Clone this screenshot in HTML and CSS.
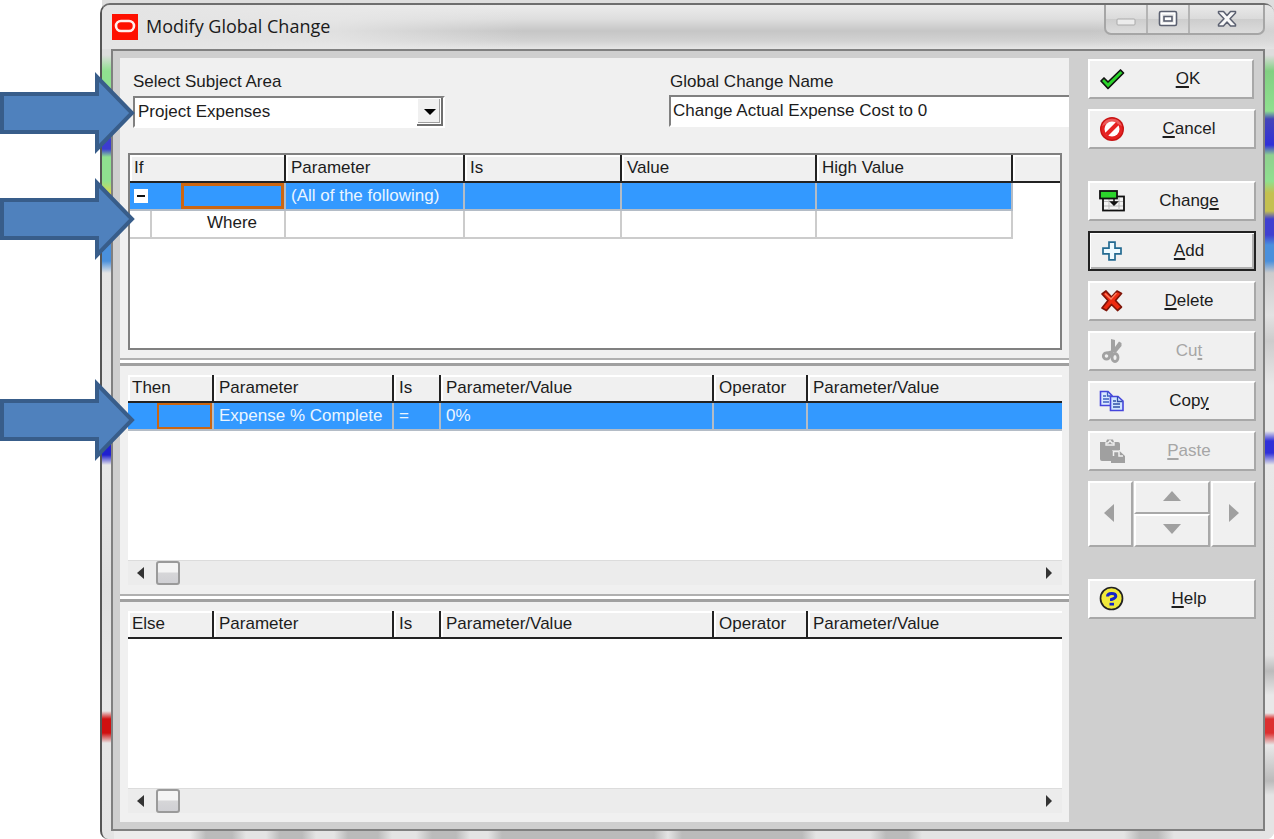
FILE: index.html
```html
<!DOCTYPE html>
<html lang="en">
<head>
<meta charset="utf-8">
<title>Modify Global Change</title>
<link rel="stylesheet" href="styles.css">
</head>
<body>
<div class="stage">
  <section class="window" aria-label="Modify Global Change">
    <header class="titlebar">
      <svg class="logo" width="26" height="26" viewBox="0 0 26 26" aria-hidden="true"><rect width="26" height="26" fill="#fe1000"/><rect x="4" y="7" width="18" height="10" rx="5" fill="none" stroke="#fff0ee" stroke-width="2.600"/></svg>
      <h1 class="title">Modify Global Change</h1>
      <div class="caption-buttons">
        <button class="caption" aria-label="Minimize"><svg width="20" height="20" viewBox="0 0 20 20"><rect x="1" y="10" width="18" height="6" rx="1" fill="#ececec" stroke="#aaa"/></svg></button>
        <button class="caption" aria-label="Maximize"><svg width="20" height="20" viewBox="0 0 20 20"><rect x="1.500" y="2.500" width="17" height="14" rx="1.500" fill="#fff" stroke="#5b6070" stroke-width="1.600"/><rect x="4" y="5" width="12" height="9" fill="#eee"/><rect x="6" y="7.500" width="8" height="4.500" fill="#fff" stroke="#5b6070" stroke-width="1.600"/></svg></button>
        <button class="caption caption-close" aria-label="Close"><svg width="20" height="20" viewBox="0 0 20 20"><path d="M1.500 2.500H6.500L10 6.500L13.500 2.500H18.500V4L13 9.700L18.500 15.500V17H13.500L10 13L6.500 17H1.500V15.500L7 9.700L1.500 4Z" fill="#f8f8f8" stroke="#5b6070" stroke-width="1.500" stroke-linejoin="round"/></svg></button>
      </div>
    </header>

    <div class="client">
      <main class="panel">
        <section class="pane pane-if">
          <div class="fields">
            <div class="field">
              <label for="subject">Select Subject Area</label>
              <div class="combo">
                <select id="subject"><option>Project Expenses</option></select>
                <svg class="combo-arrow" viewBox="0 0 26 28" width="26" height="28" aria-hidden="true"><rect width="26" height="28" fill="#6f6f6f"/><rect width="24" height="26" fill="#fff"/><rect x="1" y="1" width="22" height="24" fill="#a0a0a0"/><rect x="1" y="1" width="21" height="23" fill="#f0f0f0"/><path d="M7 11H19L13 17Z" fill="#000"/></svg>
              </div>
            </div>
            <div class="field field-name">
              <label for="name">Global Change Name</label>
              <input id="name" type="text" value="Change Actual Expense Cost to 0">
            </div>
          </div>
          <div class="grid grid-framed">
            <table class="table-if">
              <colgroup><col class="if-a"><col class="if-b"><col class="if-c"><col class="if-d"><col class="if-e"><col></colgroup>
              <thead><tr><th>If</th><th>Parameter</th><th>Is</th><th>Value</th><th>High Value</th><th></th></tr></thead>
              <tbody>
                <tr class="selected"><td class="tree"><div class="tree-cell"><button class="toggle" aria-label="Collapse"></button><span class="focus-box focus-if"></span></div></td><td>(All of the following)</td><td></td><td></td><td></td><td class="blank"></td></tr>
                <tr><td class="tree"><div class="tree-child">Where</div></td><td></td><td></td><td></td><td></td><td class="blank"></td></tr>
              </tbody>
            </table>
          </div>
        </section>
        <div class="splitter"></div>
        <section class="pane pane-then">
          <div class="grid">
            <table>
              <colgroup><col class="th-a"><col class="th-b"><col class="th-c"><col class="th-d"><col class="th-e"><col></colgroup>
              <thead><tr><th>Then</th><th>Parameter</th><th>Is</th><th>Parameter/Value</th><th>Operator</th><th>Parameter/Value</th></tr></thead>
              <tbody><tr class="selected"><td class="tree"><div class="tree-cell"><span class="focus-box focus-then"></span></div></td><td>Expense % Complete</td><td>=</td><td>0%</td><td></td><td></td></tr></tbody>
            </table>
          </div>
          <div class="scrollbar">
            <button class="scroll-step" aria-label="Scroll left"><svg width="8" height="12" viewBox="0 0 8 12"><path d="M7 0V12L0 6Z" fill="#333"/></svg></button>
            <span class="thumb"></span>
            <button class="scroll-step scroll-end" aria-label="Scroll right"><svg width="8" height="12" viewBox="0 0 8 12"><path d="M1 0V12L7 6Z" fill="#333"/></svg></button>
          </div>
        </section>
        <div class="splitter"></div>
        <section class="pane pane-else">
          <div class="grid">
            <table>
              <colgroup><col class="th-a"><col class="th-b"><col class="th-c"><col class="th-d"><col class="th-e"><col></colgroup>
              <thead><tr><th>Else</th><th>Parameter</th><th>Is</th><th>Parameter/Value</th><th>Operator</th><th>Parameter/Value</th></tr></thead>
            </table>
          </div>
          <div class="scrollbar">
            <button class="scroll-step" aria-label="Scroll left"><svg width="8" height="12" viewBox="0 0 8 12"><path d="M7 0V12L0 6Z" fill="#333"/></svg></button>
            <span class="thumb"></span>
            <button class="scroll-step scroll-end" aria-label="Scroll right"><svg width="8" height="12" viewBox="0 0 8 12"><path d="M1 0V12L7 6Z" fill="#333"/></svg></button>
          </div>
        </section>
      </main>

      <aside class="actions">
        <div class="group">
          <button class="action action-ok"><svg viewBox="0 0 26 26"><path d="M2 15L5 12L9 16L21.500 4L24.500 7L9 22.500Z" fill="#2bd42b" stroke="#111" stroke-width="1.700" stroke-linejoin="round"/></svg><span><u>O</u>K</span></button>
          <button class="action"><svg viewBox="0 0 26 26"><circle cx="13" cy="13" r="12" fill="#c81414"/><circle cx="13" cy="13" r="10.600" fill="#e62222"/><path d="M3 10A10.500 10.500 0 0 1 23 10Q13 4 3 10Z" fill="#f08080" opacity=".6"/><circle cx="13" cy="13" r="7.500" fill="#fff"/><path d="M7.500 18.500L18.500 7.500" stroke="#e62222" stroke-width="4"/></svg><span><u>C</u>ancel</span></button>
        </div>
        <div class="group">
          <button class="action"><svg viewBox="0 0 26 26"><rect x="4" y="8.500" width="21" height="14" fill="#f4f4f4" stroke="#111" stroke-width="1.800"/><path d="M5 13.500H24M5 18H24M10 10V22M20 10V22" stroke="#bbb"/><rect x="1" y="3" width="17" height="7.500" fill="#2bd42b" stroke="#111" stroke-width="1.800"/><path d="M15 10V15M12 14L15 17L18 14Z" fill="#111" stroke="#111" stroke-width="1.500"/></svg><span>Chang<u>e</u></span></button>
          <button class="action action-default"><svg viewBox="0 0 26 26"><path d="M10 4.200H16V10.200H22V15.800H16V21.800H10V15.800H4V10.200H10Z" fill="#eefaff" stroke="#236a91" stroke-width="1.700"/></svg><span><u>A</u>dd</span></button>
          <button class="action"><svg viewBox="0 0 26 26"><path d="M3 6L7 3L12.500 9L18 3L22.500 5.500L16.500 12.500L22.500 19L18.500 22.500L12.500 16.500L7.500 22.500L3 20L9 12.500Z" fill="#ee2a10" stroke="#7e1408" stroke-width="1.700" stroke-linejoin="round"/><path d="M6 5.500L12 11L17.500 5" stroke="#ff8060" stroke-width="1.300" fill="none"/></svg><span><u>D</u>elete</span></button>
          <button class="action" disabled><svg viewBox="0 0 26 26"><path d="M12 1L16 2V9L20 3.500L22.500 5V8L17 14.500H12Z" fill="#a2a2a2"/><circle cx="7.500" cy="18" r="3.200" fill="none" stroke="#a2a2a2" stroke-width="2.800"/><ellipse cx="16" cy="19.500" rx="3" ry="4" fill="none" stroke="#a2a2a2" stroke-width="2.800"/><path d="M5 14.500L14 12V17H10Z" fill="#a2a2a2"/></svg><span>Cu<u>t</u></span></button>
          <button class="action"><svg viewBox="0 0 26 26"><path d="M1.500 3.500H9L13 7.500V17.500H1.500Z" fill="#dbe9ff" stroke="#4545dc" stroke-width="1.600"/><path d="M8.500 3.500V8H13M4 8H7M4 11H10M4 14H10" fill="none" stroke="#4060c0" stroke-width="1.300"/><path d="M11.500 8.500H19L24 13V22.500H11.500Z" fill="#cfe5ff" stroke="#4545dc" stroke-width="1.600"/><path d="M18.500 8.500V13.500H23.500M14 13H17M14 16H21M14 19H21" fill="none" stroke="#3050a8" stroke-width="1.300"/></svg><span>Cop<u>y</u></span></button>
          <button class="action" disabled><svg viewBox="0 0 26 26"><path d="M1 4H7L8 1.500H14L15 4H19Q21 4 21 6V12H13V23H3Q1 23 1 21Z" fill="#a0a0a0"/><path d="M7 7V5H9L11 2.500L13 5H15V7Z" fill="#a0a0a0" stroke="#efefef" stroke-width="1.400"/><path d="M13 12.500H20L26 18V25H12V19H13Z" fill="#a0a0a0"/><path d="M14.500 18V13.500H20V18H24" fill="none" stroke="#f0f0f0" stroke-width="1.500"/></svg><span><u>P</u>aste</span></button>
          <div class="mover">
            <button class="move move-left" disabled aria-label="Move left"><svg width="10" height="18" viewBox="0 0 10 18"><path d="M10 0V18L0 9Z"/></svg></button>
            <button class="move" disabled aria-label="Move up"><svg width="18" height="10" viewBox="0 0 18 10"><path d="M0 10H18L9 0Z"/></svg></button>
            <button class="move" disabled aria-label="Move down"><svg width="18" height="10" viewBox="0 0 18 10"><path d="M0 0H18L9 10Z"/></svg></button>
            <button class="move move-right" disabled aria-label="Move right"><svg width="10" height="18" viewBox="0 0 10 18"><path d="M0 0V18L10 9Z"/></svg></button>
          </div>
        </div>
        <div class="group">
          <button class="action"><svg viewBox="0 0 26 26"><circle cx="12.500" cy="12.500" r="11" fill="#f0e93c" stroke="#222" stroke-width="1.700"/><path d="M8.500 10.500Q8.500 7.500 12.500 7.500Q16.800 7.500 16.800 10.300Q16.800 12 12.500 13.500V15" fill="none" stroke="#1522c8" stroke-width="3"/><rect x="10.500" y="16.800" width="4.500" height="2.700" fill="#1522c8"/></svg><span><u>H</u>elp</span></button>
        </div>
      </aside>
    </div>
  </section>

  <svg class="callout callout-subject" viewBox="0 0 136 82" aria-hidden="true"><path d="M2 22H97V5L132 41L97 77V60H2Z"/></svg>
  <svg class="callout callout-if" viewBox="0 0 136 82" aria-hidden="true"><path d="M2 22H97V5L132 41L97 77V60H2Z"/></svg>
  <svg class="callout callout-then" viewBox="0 0 136 82" aria-hidden="true"><path d="M2 22H97V5L132 41L97 77V60H2Z"/></svg>
</div>
</body>
</html>
```
FILE: styles.css
```css
* { box-sizing: border-box; }

body {
  margin: 0;
  background: #fff;
  color: #1c1c1c;
  font: 17px/24px "Liberation Sans", Arial, sans-serif;
}

button, input, select {
  font: inherit;
  color: inherit;
  border-radius: 0;
  margin: 0;
}

button { padding: 0; border: 0; background: none; }

.stage {
  position: relative;
  display: flex;
  min-height: 100vh;
  padding: 3px 0 0 100px;
  background: linear-gradient(90deg, #fff 102px, #dedede 102px) 0 0 / 100% 12px no-repeat;
}

/* Window frame: translucent glass with blurred colours behind its edges */
.window {
  flex: 1;
  display: flex;
  flex-direction: column;
  min-width: 0;
  padding: 0 9px 8px;
  border-top: 2px solid #6e6e6e;
  border-left: 2px solid #555;
  border-radius: 10px 10px 8px 8px;
  background:
    linear-gradient(#ddd 50px, #8fe08f 66px, #8fe08f 126px, #3c3cd0 134px, #3c3cd0 144px, #8fe08f 152px, #8fe08f 176px, #d8d850 188px, #d8d850 200px, #4545d0 212px, #4545d0 230px, #4a90dc 240px, #4a90dc 256px, #e4e4e4 268px, #e8e8e8 430px, #2020d0 438px, #2020d0 450px, #e8e8e8 460px, #dfdfdf 580px, #e8e8e8 706px, #d01010 714px, #d01010 728px, #e6e6e6 738px, #e4e4e4) 0 0 / 12px 100% no-repeat,
    linear-gradient(#ddd 50px, #82d082 66px, #8fe08f 106px, #4545b8 114px, #3030d8 140px, #8fd08f 150px, #8fe08f 176px, #c4c050 188px, #c4c050 206px, #4040d0 214px, #4040d0 230px, #4a90dc 240px, #4a90dc 256px, #ccc 268px, #e2e2e2 310px, #ccc 336px, #e8e8e8 380px, #e8e8e8 426px, #3030d8 436px, #3030d8 448px, #e8e8e8 460px, #e2e2e2 650px, #bbb 666px, #e8e8e8 690px, #e8e8e8 708px, #dc3030 714px, #dc3030 728px, #e8e8e8 740px, #bbb 776px, #e4e4e4 790px) 100% 0 / 10px 100% no-repeat,
    linear-gradient(90deg, #ececec 88px, #bbb 104px, #bbb 130px, #e4e4e4 144px, #e4e4e4 164px, #bbb 178px, #bbb 200px, #e4e4e4 214px, #e4e4e4 232px, #bbb 246px, #bbb 276px, #e4e4e4 290px, #e4e4e4 314px, #bbb 330px, #bbb 354px, #e4e4e4 368px, #e4e4e4 386px, #bbb 400px, #bbb 552px, #e4e4e4 566px, #bbb 580px, #bbb 700px, #e4e4e4 714px, #e4e4e4 768px, #bbb 784px, #bbb 806px, #e4e4e4 820px, #e4e4e4 1022px, #bbb 1038px, #bbb 1056px, #e4e4e4 1072px) 0 100% / 100% 8px no-repeat,
    #e2e2e2;
}

.titlebar {
  display: flex;
  align-items: center;
  height: 44px;
  margin: 0 -9px;
  padding: 0 9px 0 10px;
  gap: 8px;
  border-radius: 8px 8px 0 0;
  background:
    linear-gradient(90deg, #e4e4e4 0, #e8e8e8c0 20%, #dcdcdc00 36%, #dcdcdc00 84%, #e0e0e080 100%),
    linear-gradient(#ececec 0, #dedede 14px, #c6c6c6 26px, #d2d2d2 36px, #e6e6e6 44px);
}

.title {
  flex: 1;
  margin: 0;
  padding-bottom: 2px;
  color: #1a1a1a;
  font: 18px/26px "Open Sans", "Noto Sans", sans-serif;
}

.caption-buttons {
  display: flex;
  align-self: flex-start;
  height: 30px;
  border: 2px solid #a6a6a6;
  border-top: 0;
  border-radius: 0 0 7px 7px;
  background: linear-gradient(#eaeaea, #dadada 50%, #cdcdcd 51%, #dcdcdc);
}

.caption { display: grid; place-items: center; width: 42px; border-right: 2px solid #b4b4b4; }
.caption-close { width: 73px; border-right: 0; }

.client {
  flex: 1;
  display: grid;
  grid-template-columns: minmax(0, 1fr) 194px;
  padding: 7px 0 7px 7px;
  border: 2px solid #808080;
  background: #cfcfcf;
}

.panel { display: flex; flex-direction: column; min-width: 0; background: #f0f0f0; }

.pane { display: flex; flex-direction: column; padding: 9px 7px 9px 8px; }
.pane-if { flex: 1 1 300px; padding-top: 12px; padding-bottom: 8px; }
.pane-then { flex: 1 1 228px; }
.pane-else { flex: 1 1 220px; }

.splitter {
  height: 8px;
  border-top: 2px solid #b0b0b0;
  border-bottom: 3px solid #a0a0a0;
  background: #fff;
}

.fields { display: flex; justify-content: space-between; margin: 0 -7px 25px 5px; }
.field { display: flex; flex-direction: column; gap: 2px; }
.field label { line-height: 24px; }
.field-name { width: 400px; gap: 1px; }
.field-name label { padding-left: 1px; }

.combo { position: relative; width: 312px; height: 32px; border: 2px solid; border-color: #808080 #fff #fff #808080; background: #fff; }
.combo select { width: 100%; height: 28px; padding: 0 30px 0 3px; border: 0; background: #fff; appearance: none; }
.combo-arrow { position: absolute; top: 0; right: 0; pointer-events: none; }

.field-name input {
  width: 100%;
  height: 32px;
  padding: 0 2px;
  border: 2px solid;
  border-color: #808080 #fff #fff #808080;
  border-right: 0;
  background: #fff;
}

.grid { flex: 1; background: #fff; }
.grid-framed { border: 2px solid #808080; }

table { width: 100%; table-layout: fixed; border-collapse: separate; border-spacing: 0; }
.if-a { width: 156px; }
.if-b { width: 179px; }
.if-c { width: 157px; }
.if-d { width: 195px; }
.if-e { width: 196px; }
.th-a { width: 86px; }
.th-b { width: 180px; }
.th-c { width: 47px; }
.th-d { width: 273px; }
.th-e { width: 94px; }

th {
  height: 28px;
  padding: 0 4px;
  border-right: 2px solid #222;
  border-bottom: 2px solid #222;
  background: #f0f0f0;
  box-shadow: inset 2px 2px #fff;
  font-weight: 400;
  line-height: 24px;
  text-align: left;
  white-space: nowrap;
}
th:last-child { border-right: 0; }
th + th, td + td { padding-left: 5px; }

td {
  height: 28px;
  padding: 0 4px;
  border-right: 2px solid #ccc;
  border-bottom: 2px solid #ccc;
  line-height: 24px;
  white-space: nowrap;
}
td:last-child { border-right: 0; }
td.blank { border: 0; background: #fff; }
td.tree { padding: 0; }

.selected td { background: #3399ff; color: #eaf5ff; border-color: #b4bcc6; }
.selected td.blank { background: #fff; }

.tree-cell { display: flex; align-items: center; justify-content: space-between; height: 26px; }
.tree-child { height: 26px; margin-left: 20px; padding-left: 55px; border-left: 2px solid #ccc; }

.toggle { display: grid; place-items: center; width: 14px; height: 14px; margin-left: 4px; background: #fff; }
.toggle::before { content: ""; width: 8px; height: 2px; background: #111; }

.focus-box { height: 26px; margin-left: auto; border: 3px solid #cc6611; }
.focus-if { width: 103px; }
.focus-then { width: 55px; border-width: 2px; }

.scrollbar {
  display: flex;
  align-items: center;
  height: 25px;
  padding: 0 8px;
  border-top: 1px solid #dcdcdc;
  background: #ececec;
}
.scroll-step { display: grid; place-items: center; width: 10px; height: 24px; }
.scroll-end { margin-left: auto; }
.thumb {
  width: 24px;
  height: 24px;
  margin-left: 10px;
  border: 2px solid #9a9a9a;
  border-radius: 3px;
  background: linear-gradient(#f4f4f4 45%, #d6d6d8 50%, #d0d0d4);
}

.actions { display: flex; flex-direction: column; gap: 32px; padding: 1px 7px 0 19px; }
.group { display: flex; flex-direction: column; gap: 10px; }

.action {
  display: grid;
  grid-template-columns: 26px 1fr;
  align-items: center;
  height: 40px;
  padding: 0 9px;
  border: 2px solid;
  border-color: #fff #a8a8a8 #a8a8a8 #fff;
  background: #f0f0f0;
  gap: 8px;
  text-align: center;
}
.action svg { width: 26px; height: 26px; }
.action u { text-decoration-thickness: 2px; text-underline-offset: 2px; }
.action:disabled { color: #a6a6a6; }
.action-ok { margin-right: 2px; }
.action-default { border-color: #222; box-shadow: inset 1px 1px #fff, inset -2px -2px #b0b0b0; }

.mover {
  display: grid;
  grid-template: 33px 33px / 45px 1fr 45px;
  column-gap: 1px;
}
.move {
  display: grid;
  place-items: center;
  padding-bottom: 3px;
  border: 2px solid;
  border-color: #fff #a8a8a8 #a8a8a8 #fff;
  background: #f0f0f0;
}
.move svg { fill: #a0a0a0; }
.move-left { grid-area: 1 / 1 / 3 / 2; padding-right: 4px; }
.move-right { grid-area: 1 / 3 / 3 / 4; }

/* Annotation arrows drawn over the window */
.callout { position: absolute; left: 0; width: 136px; height: 82px; fill: #4f81bd; stroke: #385d8a; stroke-width: 4; }
.callout-subject { top: 72px; }
.callout-if { top: 178px; }
.callout-then { top: 379px; }
```
